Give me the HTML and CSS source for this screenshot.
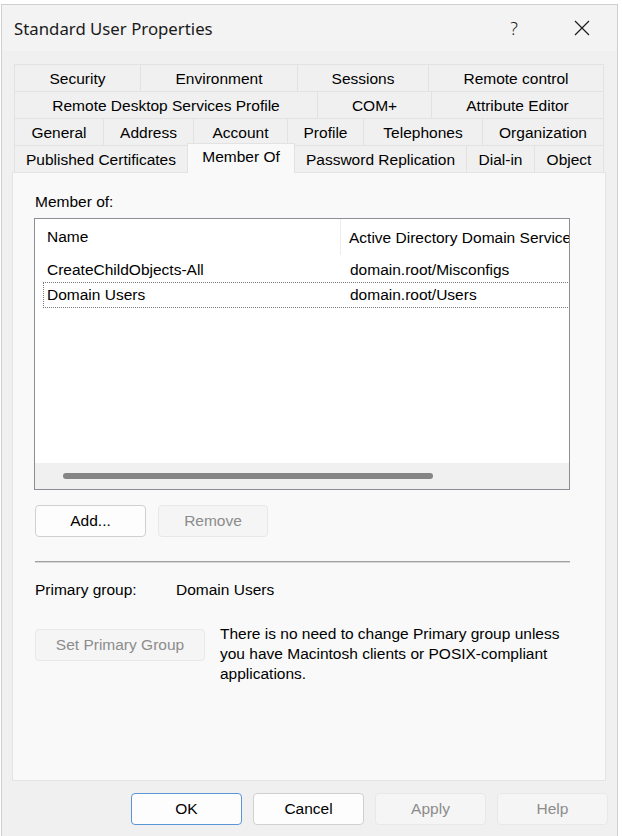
FILE: index.html
```html
<!DOCTYPE html>
<html>
<head>
<meta charset="utf-8">
<link rel="stylesheet" href="styles.css">
</head>
<body>
<div class="window">
  <div class="titlebar">
    <span class="title">Standard User Properties</span>
    <span class="help">?</span>
    <span class="close">
      <svg width="16" height="16" viewBox="0 0 16 16"><path d="M1 1 L15 15 M15 1 L1 15" stroke="#1a1a1a" stroke-width="1.2" fill="none"/></svg>
    </span>
  </div>

  <div class="tabs">
    <div class="tabrow r1">
      <div class="tab">Security</div>
      <div class="tab">Environment</div>
      <div class="tab">Sessions</div>
      <div class="tab">Remote control</div>
    </div>
    <div class="tabrow r2">
      <div class="tab">Remote Desktop Services Profile</div>
      <div class="tab">COM+</div>
      <div class="tab">Attribute Editor</div>
    </div>
    <div class="tabrow r3">
      <div class="tab">General</div>
      <div class="tab">Address</div>
      <div class="tab">Account</div>
      <div class="tab">Profile</div>
      <div class="tab">Telephones</div>
      <div class="tab">Organization</div>
    </div>
    <div class="tabrow r4">
      <div class="tab">Published Certificates</div>
      <div class="tab selected">Member Of</div>
      <div class="tab">Password Replication</div>
      <div class="tab">Dial-in</div>
      <div class="tab">Object</div>
    </div>
  </div>

  <div class="panel">
    <div class="label">Member of:</div>
    <div class="listbox">
      <div class="lheader">
        <div class="hcol c1">Name</div>
        <div class="hcol c2">Active Directory Domain Services Folder</div>
      </div>
      <div class="lrow">
        <div class="cell c1">CreateChildObjects-All</div>
        <div class="cell c2">domain.root/Misconfigs</div>
      </div>
      <div class="lrow focus">
        <div class="cell c1">Domain Users</div>
        <div class="cell c2">domain.root/Users</div>
      </div>
      <div class="lfill"></div>
      <div class="hscroll"><div class="thumb"></div></div>
    </div>

    <div class="btnrow">
      <button class="btn">Add...</button>
      <button class="btn disabled">Remove</button>
    </div>

    <div class="sep"></div>

    <div class="primary">
      <span class="plabel">Primary group:</span>
      <span>Domain Users</span>
    </div>

    <div class="setrow">
      <button class="btn disabled wide">Set Primary Group</button>
      <p class="note">There is no need to change Primary group unless you have Macintosh clients or POSIX-compliant applications.</p>
    </div>
  </div>

  <div class="footer">
    <button class="btn default">OK</button>
    <button class="btn">Cancel</button>
    <button class="btn disabled">Apply</button>
    <button class="btn disabled">Help</button>
  </div>
</div>
</body>
</html>
```

FILE: styles.css
```css
* { box-sizing: border-box; }
html, body { margin: 0; padding: 0; background: #ffffff; }
body {
  font-family: "Liberation Sans", Arial, sans-serif;
  font-size: 15.5px;
  color: #000;
}
.window {
  margin: 4px 0 0 1px;
  width: 617px;
  height: 840px;
  background: #f0f0f0;
  border: 1px solid #cfcfcf;
  padding: 0 11px 0 10px;
  display: flex;
  flex-direction: column;
}
.titlebar {
  height: 46px;
  display: flex;
  align-items: center;
  margin: 0 -11px 0 -10px;
  padding-left: 12px;
  background: #f3f3f3;
}
.title {
  font-family: "Noto Sans", sans-serif;
  font-size: 16.8px;
  color: #1a1a1a;
  flex: 1;
}
.help {
  font-family: "Noto Sans", sans-serif;
  font-weight: 300;
  font-size: 18px;
  color: #222;
  width: 20px;
  text-align: center;
  margin-right: 50px;
}
.close {
  width: 16px;
  height: 16px;
  display: flex;
  margin-right: 27px;
}
.tabs {
  margin-top: 13px;
  padding: 0 2px;
}
.tabrow {
  display: grid;
  height: 27px;
}
.r1 { grid-template-columns: 127px 157px 131px 1fr; }
.r2 { grid-template-columns: 304px 114px 1fr; }
.r3 { grid-template-columns: 90px 90px 94px 76px 119px 1fr; }
.r4 { grid-template-columns: 174px 107px 172px 68px 1fr; }
.tab {
  display: flex;
  align-items: center;
  justify-content: center;
  border-top: 1px solid #e2e2e2;
  border-right: 1px solid #e2e2e2;
  white-space: nowrap;
  padding-top: 1px;
}
.tab:first-child { border-left: 1px solid #e2e2e2; }
.tab.selected {
  background: #f9f9f9;
  margin-top: -2px;
  padding-top: 0;
  padding-bottom: 3px;
  border-left: 1px solid #e2e2e2;
  margin-left: -1px;
  position: relative;
  z-index: 1;
  margin-bottom: -1px;
}
.panel {
  height: 609px;
  background: #f9f9f9;
  border: 1px solid #e4e4e4;
  padding: 20px 0 0 21px;
  display: flex;
  flex-direction: column;
}
.label {
  line-height: 18px;
  margin-left: 1px;
}
.listbox {
  margin-top: 7px;
  width: 536px;
  height: 272px;
  border: 1px solid #8b8f95;
  background: #fff;
  display: flex;
  flex-direction: column;
  overflow: hidden;
}
.lheader {
  height: 38px;
  display: flex;
  flex: none;
}
.hcol {
  display: flex;
  align-items: center;
  white-space: nowrap;
}
.lheader .c1 {
  flex: none;
  width: 306px;
  padding-left: 12px;
  border-right: 1px solid #ececec;
  margin-bottom: 2px;
}
.lheader .c2 {
  flex: none;
  padding-left: 8px;
}
.lrow {
  display: flex;
  height: 25px;
  align-items: center;
  margin-left: 8px;
  flex: none;
  white-space: nowrap;
}
.lrow .c1 { flex: none; width: 298px; padding-left: 4px; }
.lrow .c2 { padding-left: 9px; }
.lrow.focus {
  height: 26px;
  border-top: 1px dotted #7a7a7a;
  border-bottom: 1px dotted #7a7a7a;
  border-left: 1px dotted #7a7a7a;
  margin-right: 1px;
}
.lrow.focus .c1 { width: 297px; padding-left: 3px; }
.lfill { flex: 1; }
.hscroll {
  height: 26px;
  flex: none;
  background: #f0f0f0;
  display: flex;
  align-items: center;
  padding-left: 28px;
}
.thumb {
  width: 370px;
  height: 6px;
  border-radius: 3px;
  background: #858585;
}
.btn {
  font-family: "Liberation Sans", Arial, sans-serif;
  font-size: 15.5px;
  width: 111px;
  height: 32px;
  background: #fdfdfd;
  border: 1px solid #d0d0d0;
  border-radius: 4px;
  color: #000;
  padding: 0;
}
.btn.disabled {
  background: #f5f5f5;
  border-color: #e8e8e8;
  color: #8c8c8c;
}
.btn.default {
  border-color: #5b95d6;
}
.btnrow {
  margin-top: 15px;
  display: flex;
  gap: 12px;
  margin-left: 1px;
}
.btnrow .btn + .btn { width: 110px; }
.sep {
  margin-top: 24px;
  width: 535px;
  margin-left: 1px;
  height: 2px;
  border-top: 1px solid #a0a0a0;
  border-bottom: 1px solid #d8d8d8;
}
.primary {
  margin-top: 18px;
  line-height: 18px;
  display: flex;
  margin-left: 1px;
}
.plabel { width: 141px; }
.setrow {
  margin-top: 25px;
  display: flex;
  align-items: flex-start;
  margin-left: 1px;
}
.btn.wide {
  width: 170px;
  margin-top: 5px;
}
.note {
  margin: 0 0 0 15px;
  line-height: 20px;
  width: 350px;
}
.footer {
  display: flex;
  justify-content: flex-end;
  gap: 11px;
  padding-top: 12px;
  margin-right: -2px;
}
```
